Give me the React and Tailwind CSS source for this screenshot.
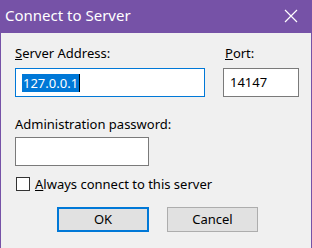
import React from "react";

const font = { fontFamily: '"Noto Sans", "Open Sans", sans-serif' };

const App = () => {
  return (
    <div
      className="w-[312px] h-[248px] flex flex-col bg-[#7652a7] text-[13px] text-black"
      style={font}
    >
      {/* title bar */}
      <div className="h-[33px] flex items-center justify-between pl-[5px] pr-[14px] text-white">
        <span className="text-[15px] leading-none -mt-[2px]">Connect to Server</span>
        <svg width="14" height="14" viewBox="0 0 14 14" className="-mt-[2px]">
          <path d="M1 1L13 13M13 1L1 13" stroke="white" strokeWidth="1.2" />
        </svg>
      </div>

      {/* client area */}
      <div className="flex-1 mx-[1px] bg-[#f0f0f0] pl-[14px] pt-[10px] flex flex-col">
        <div className="flex gap-[18px]">
          <div className="flex flex-col">
            <label className="h-[20px] leading-[20px]">
              <span className="underline">S</span>erver Address:
            </label>
            <div className="mt-[5px] w-[190px] h-[29px] border border-[#0078d7] bg-white flex items-center pl-[6px]">
              <span className="bg-[#0078d7] text-white leading-[18px] px-[1px]">127.0.0.1</span>
              <span className="w-[1px] h-[18px] bg-black" />
            </div>
          </div>
          <div className="flex flex-col">
            <label className="h-[20px] leading-[20px] pl-[2px]">
              <span className="underline">P</span>ort:
            </label>
            <div className="mt-[5px] w-[76px] h-[29px] border border-[#7a7a7a] bg-white flex items-center pl-[6px]">
              14147
            </div>
          </div>
        </div>

        <label className="mt-[17px] h-[20px] leading-[20px]">Administration password:</label>
        <div className="mt-[3px] w-[134px] h-[29px] border border-[#7a7a7a] bg-white" />

        <div className="mt-[8px] h-[20px] flex items-center gap-[5px] pl-[1px]">
          <div className="w-[14px] h-[14px] border border-[#333] bg-white" />
          <span className="leading-[20px]">
            <span className="underline">A</span>lways connect to this server
          </span>
        </div>

        <div className="mt-[13px] flex gap-[18px] pl-[42px]">
          <button className="w-[92px] h-[25px] border-2 border-[#0078d7] bg-[#e1e1e1] leading-none">
            OK
          </button>
          <button className="w-[91px] h-[25px] border border-[#adadad] bg-[#e1e1e1] leading-none">
            Cancel
          </button>
        </div>
      </div>
    </div>
  );
};

export default App;
